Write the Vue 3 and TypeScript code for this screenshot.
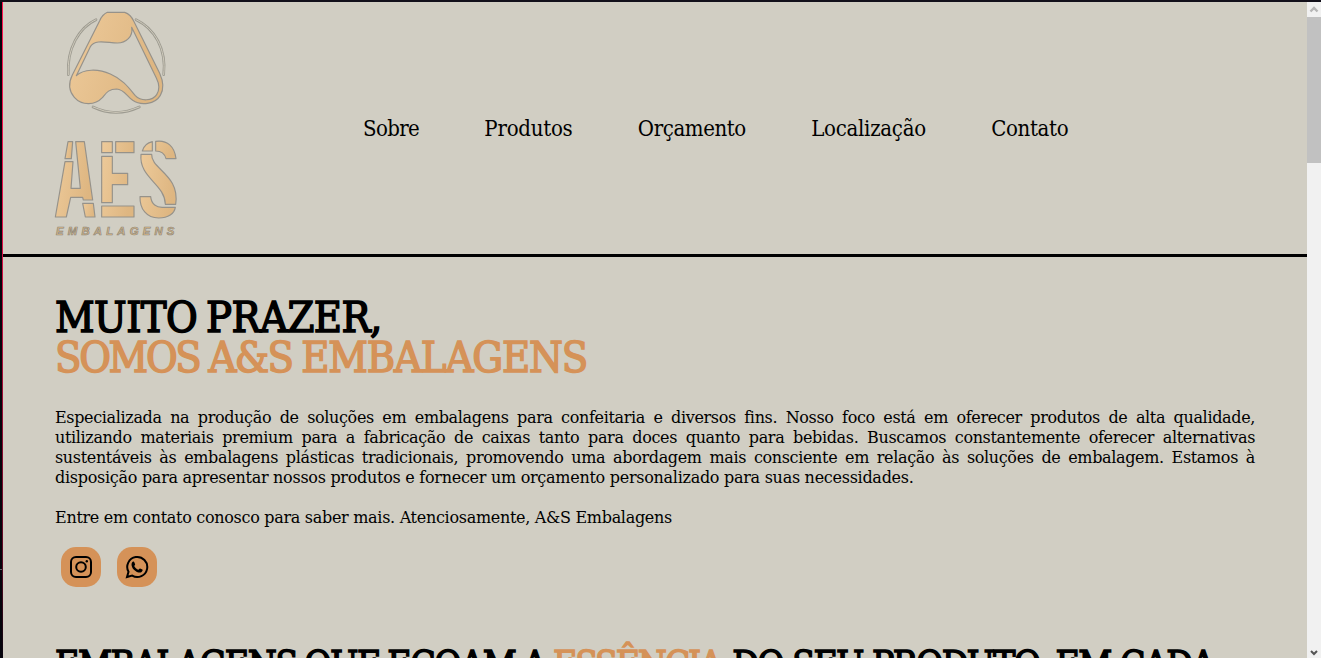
<script setup lang="ts">
interface NavItem {
  label: string
  id: string
}

const navItems: NavItem[] = [
  { label: 'Sobre', id: 'sobre' },
  { label: 'Produtos', id: 'produtos' },
  { label: 'Orçamento', id: 'orcamento' },
  { label: 'Localização', id: 'localizacao' },
  { label: 'Contato', id: 'contato' },
]

const aboutLines: string[] = [
  'Especializada na produção de soluções em embalagens para confeitaria e diversos fins. Nosso foco está em oferecer produtos de alta qualidade,',
  'utilizando materiais premium para a fabricação de caixas tanto para doces quanto para bebidas. Buscamos constantemente oferecer alternativas',
  'sustentáveis às embalagens plásticas tradicionais, promovendo uma abordagem mais consciente em relação às soluções de embalagem. Estamos à',
]
</script>

<template>
  <div class="window">
    <div class="edge"><i></i></div>
    <div class="page">
      <header class="header">
        <svg class="logo" viewBox="0 0 450 750" aria-label="AES Embalagens">
          <defs>
            <linearGradient id="gold" x1="0" y1="0" x2="1" y2="0.3">
              <stop offset="0" stop-color="#edca9a" />
              <stop offset="1" stop-color="#deb681" />
            </linearGradient>
          </defs>
          <g fill="none" stroke-linecap="round">
            <g stroke="#9d9b91" stroke-width="8">
              <path d="M168 59C118 82 80 145 85 224M288 59C344 85 380 148 371 224M159 321Q228 354 298 321" />
            </g>
            <g stroke="#cfcabb" stroke-width="3">
              <path d="M168 59C118 82 80 145 85 224M288 59C344 85 380 148 371 224M159 321Q228 354 298 321" />
            </g>
          </g>
          <g fill="url(#gold)" stroke="#96928a" stroke-width="3.5" stroke-linejoin="round">
            <path fill-rule="evenodd" d="M202 37H254Q272 43 281 63L359 220Q377 260 361 286C345 313 303 318 278 301C258 286 252 268 230 267C205 267 198 280 187 293C166 316 126 318 103 292C86 272 86 247 97 225L179 62Q187 44 202 37ZM275 82C280 110 258 129 232 129C203 129 166 116 151 140L109 227C130 207 174 205 211 222C250 239 267 264 286 287C302 304 337 304 350 284C361 267 357 250 349 234Z" />
            <g transform="translate(0 375)">
              <path d="M84 50H98L94 101H75Z" />
              <path d="M107 50H133L158 225H130L128 217H92L79 276H46L75 110H99L93 190H121Z" />
              <path d="M128 235H160L165 276H136Z" />
              <path d="M185 50H217V83H185ZM227 50H282V83H227ZM185 94H217V145H263V179H217V233H185ZM185 243H282V276H185Z" />
              <path d="M337 50V78H307Q314 55 337 50ZM347 49C382 44 404 65 408 101H378Q372 78 347 78Z" />
              <path d="M303 88H335C332 132 421 150 407 238H376C375 176 296 159 303 88ZM300 215H332C334 238 350 248 369 247H406C403 266 385 279 356 279C320 279 299 252 300 215Z" />
            </g>
          </g>
          <text x="48" y="706" textLength="355" lengthAdjust="spacing" class="logo-word">EMBALAGENS</text>
        </svg>
        <nav class="nav">
          <a v-for="item in navItems" :key="item.id" :class="item.id">{{ item.label }}</a>
        </nav>
      </header>

      <main class="content">
        <h1 class="title">
          <span class="first">MUITO PRAZER,</span>
          <span class="accent second"><b class="tight">SOMOS</b> <b class="snug">A&amp;S</b> <b>EMBALAGENS</b></span>
        </h1>
        <div class="about">
          <p v-for="line in aboutLines" :key="line" class="full">{{ line }}</p>
          <p><span>disposição para apresentar nossos produtos e fornecer um orçamento personalizado para suas necessidades.</span></p>
          <p class="closing"><span>Entre em contato conosco para saber mais. Atenciosamente, A&amp;S Embalagens</span></p>
        </div>
        <div class="social">
          <a aria-label="Instagram">
            <svg viewBox="0 0 24 24" fill="none" stroke="#000" stroke-width="2">
              <rect x="2" y="2" width="20" height="20" rx="5" />
              <circle cx="12" cy="12" r="4.8" />
              <circle cx="17.8" cy="6.2" r="1.2" fill="#000" stroke="none" />
            </svg>
          </a>
          <a aria-label="WhatsApp">
            <svg viewBox="0 0 24 24">
              <path d="M2 22L3.5 16.8A10 10 0 1 1 7.2 20.6Z" fill="none" stroke="#000" stroke-width="2" />
              <path d="M8 6.6C8.6 6.2 9 6.7 9.3 7.3L10.1 9.2C10.3 9.8 9.5 10.5 9.2 10.9C10.1 12.8 11.5 14 13.4 14.8C13.9 14.5 14.5 13.2 15.1 13.5L17.4 14.6C18 15 17.4 16.4 16.6 17C13.9 18.8 9 15.8 7.4 12.7C6 10.2 6.3 7.8 8 6.6Z" />
            </svg>
          </a>
        </div>
        <h2 class="subtitle"><span>EMBALAGENS QUE ECOAM A </span><span class="accent essence">ESSÊNCIA</span><span class="rest"> DO SEU PRODUTO, EM CADA</span></h2>
      </main>
    </div>
    <div class="scrollbar">
      <svg viewBox="0 0 14 15"><path d="M3.5 9.5L7 6L10.5 9.5" fill="none" stroke="#b5b5b5" stroke-width="2.4" /></svg>
      <div class="thumb"></div>
      <svg class="down" viewBox="0 0 14 15"><path d="M4 8L7 11L10 8" fill="none" stroke="#555" stroke-width="2" /></svg>
    </div>
  </div>
</template>

<style>
body {
  margin: 0;
  overflow: hidden;
}
</style>

<style scoped>
.window {
  box-sizing: border-box;
  display: flex;
  width: 1321px;
  height: 658px;
  overflow: hidden;
  border-top: 2px solid #12101a;
  background: #d1cec3;
  color: #000;
  font-family: "DejaVu Serif Condensed", "DejaVu Serif", serif;
  font-stretch: condensed;
}
.edge {
  box-sizing: border-box;
  flex: 0 0 3px;
  background: #05040c;
  border-right: 1px solid;
  border-image: linear-gradient(#ff1450 0, #e00d46 35%, #5a0822 85%, #08050e 100%) 1;
}
.edge i {
  display: block;
  width: 2px;
  height: 1px;
  margin-top: 567px;
  background: #64646c;
}
.page {
  flex: 0 0 1304px;
  overflow: hidden;
}
.header {
  box-sizing: border-box;
  height: 255px;
  display: flex;
  border-bottom: 3px solid #000;
}
.logo {
  flex: none;
  width: 150px;
  height: 250px;
  margin: -2px 0 0 37px;
}
.logo-word {
  font: italic bold 34px "Liberation Sans", sans-serif;
  fill: #dcb984;
  stroke: #8c877d;
  stroke-width: 2px;
}
.nav {
  display: flex;
  gap: 65.3px;
  margin: 112px 0 0 173px;
  height: 30px;
  line-height: 30px;
  font-size: 22px;
  white-space: nowrap;
}
.sobre {
  letter-spacing: -0.65px;
}
.produtos {
  letter-spacing: -0.25px;
}
.orcamento {
  letter-spacing: -0.4px;
}
.localizacao {
  letter-spacing: -0.27px;
}
.contato {
  letter-spacing: -0.33px;
}
.content {
  padding: 40px 52px 0;
}
.title {
  margin: 0;
  font-size: 43px;
  line-height: 40px;
  font-weight: 400;
  white-space: nowrap;
  -webkit-text-stroke: 1.5px currentColor;
}
.title > span {
  display: block;
  width: max-content;
}
.title b {
  font-weight: 400;
}
.first {
  letter-spacing: -0.55px;
  word-spacing: -3px;
}
.second {
  letter-spacing: -1.15px;
  word-spacing: -2.2px;
}
.tight {
  letter-spacing: -2.3px;
}
.snug {
  letter-spacing: -1.7px;
}
.accent {
  color: #d59258;
}
.about {
  width: 1200px;
  margin-top: 31px;
  font-family: "DejaVu Serif", serif;
  font-stretch: normal;
  font-size: 16px;
  line-height: 20px;
  letter-spacing: -0.28px;
}
.about p {
  margin: 0;
  height: 20px;
  white-space: nowrap;
}
.about .full {
  text-align: justify;
  text-align-last: justify;
  white-space: normal;
  letter-spacing: -0.35px;
}
.about .closing {
  margin-top: 20px;
  letter-spacing: -0.3px;
}
.social {
  display: flex;
  gap: 16px;
  margin: 19px 0 0 6px;
}
.social a {
  display: grid;
  place-items: center;
  width: 40px;
  height: 40px;
  border-radius: 15px;
  background: #d59258;
}
.social svg {
  width: 24px;
  height: 24px;
}
.subtitle {
  margin: 53px 0 0;
  font-size: 37px;
  line-height: 50px;
  font-weight: 400;
  white-space: pre;
  letter-spacing: -1.4px;
  word-spacing: -1.7px;
  -webkit-text-stroke: 1.4px currentColor;
}
.essence {
  letter-spacing: -2.2px;
}
.rest {
  margin-left: 2px;
  letter-spacing: -1.65px;
  word-spacing: 0.5px;
}
.scrollbar {
  flex: 0 0 14px;
  display: flex;
  flex-direction: column;
  background: #f1f1f1;
}
.scrollbar svg {
  width: 14px;
  height: 15px;
}
.thumb {
  height: 146px;
  background: #c1c1c1;
}
.down {
  margin-top: auto;
}
</style>
